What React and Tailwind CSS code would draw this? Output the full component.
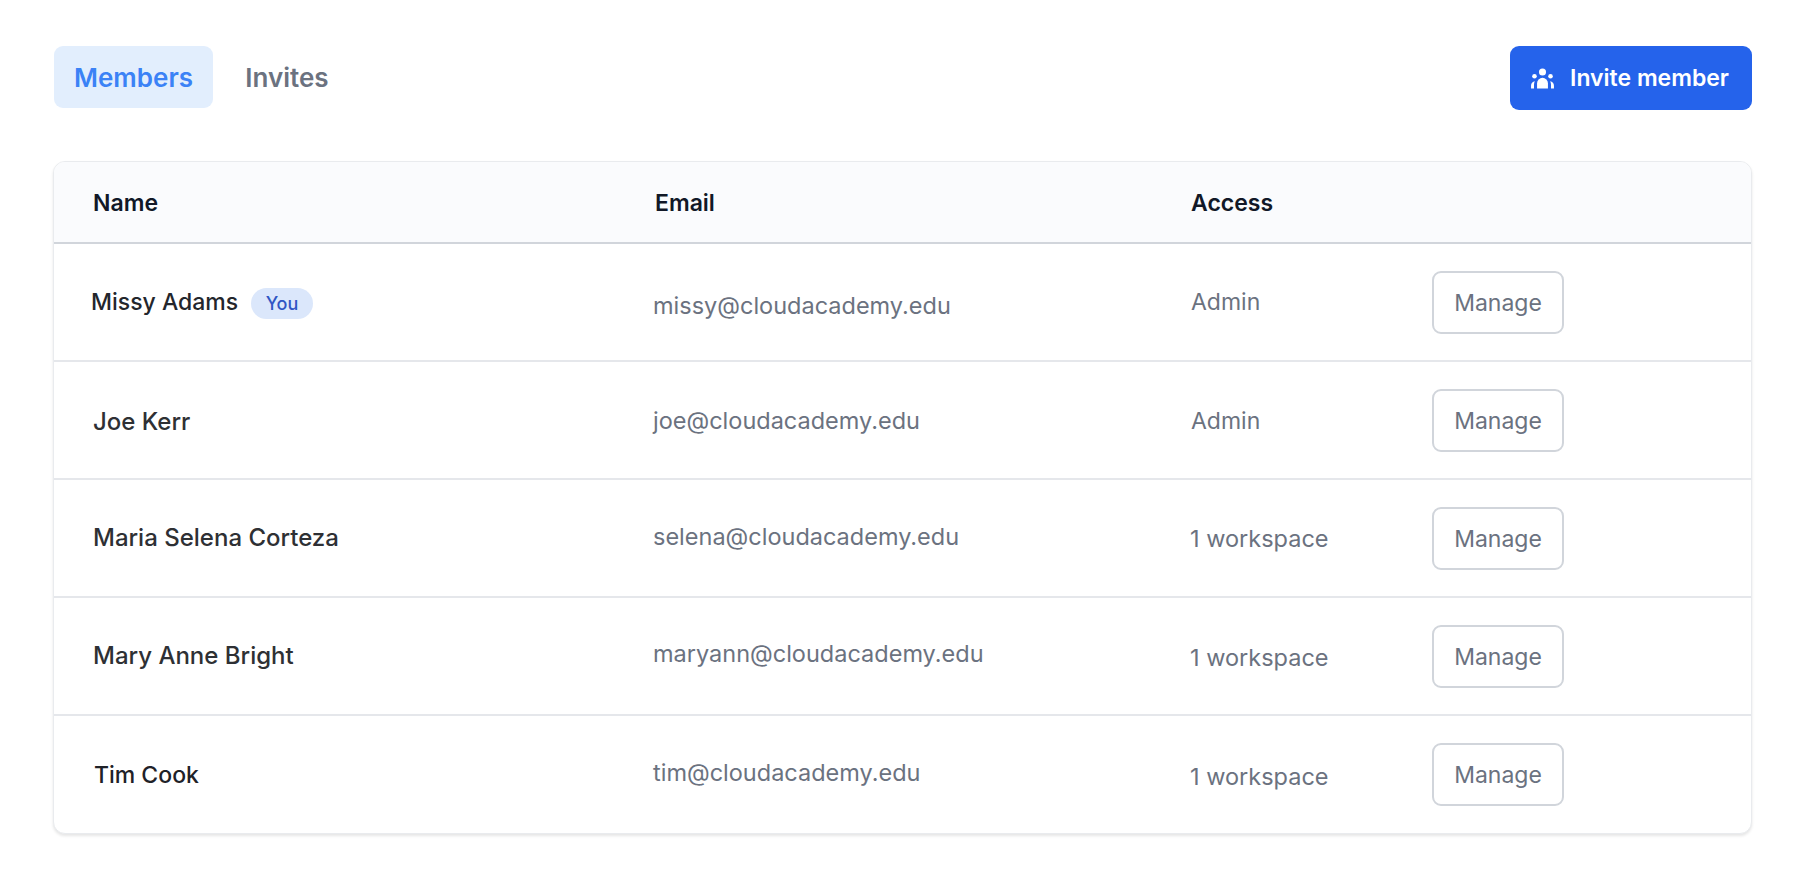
const MEMBERS = [
  {
    name: 'Missy Adams',
    email: 'missy@cloudacademy.edu',
    access: 'Admin',
    you: true,
    nameClass: 'text-[23px] -ml-[2px] text-[#23262c]',
    emailClass: 'mt-[7px]',
    accessClass: 'text-[23px]',
  },
  {
    name: 'Joe Kerr',
    email: 'joe@cloudacademy.edu',
    access: 'Admin',
    nameClass: 'text-[24px] mt-[3px] text-[#2e3034]',
    emailClass: 'mt-[2px]',
    accessClass: 'text-[23px] mt-[2px]',
  },
  {
    name: 'Maria Selena Corteza',
    email: 'selena@cloudacademy.edu',
    access: '1 workspace',
    nameClass: 'text-[24px] text-[#2e3034]',
    emailClass: '-mt-[2px]',
    accessClass: 'text-[23.5px] -ml-[1px] mt-[1px]',
  },
  {
    name: 'Mary Anne Bright',
    email: 'maryann@cloudacademy.edu',
    access: '1 workspace',
    nameClass: 'text-[24px] text-[#2e3034]',
    emailClass: '-mt-[4px]',
    accessClass: 'text-[23.5px] -ml-[1px] mt-[4px]',
  },
  {
    name: 'Tim Cook',
    email: 'tim@cloudacademy.edu',
    access: '1 workspace',
    nameClass: 'text-[23px] ml-[1px] mt-[2px] text-[#1f2228]',
    emailClass: '-mt-[4px]',
    accessClass: 'text-[23.5px] -ml-[1px] mt-[4px]',
  },
];

function GroupIcon() {
  return (
    <svg viewBox="0 0 24 22" fill="currentColor" className="h-[21px] w-[23px]">
      <circle cx="12" cy="4.2" r="3.7" />
      <circle cx="3.6" cy="8.6" r="2.4" />
      <circle cx="20.4" cy="8.6" r="2.4" />
      <path d="M6.3 21.5V16a5.7 5.7 0 0 1 11.4 0v5.5z" />
      <path d="M0 21.5v-3c0-2.4 1.6-4.2 4-4.6-.5 1-.9 2.2-.9 3.4v4.2z" />
      <path d="M24 21.5v-3c0-2.4-1.6-4.2-4-4.6.5 1 .9 2.2.9 3.4v4.2z" />
    </svg>
  );
}

export default function App() {
  return (
    <div className="min-h-screen bg-white px-[54px] pt-[46px] font-['Inter',sans-serif]">
      {/* Tabs + invite */}
      <div className="flex items-start justify-between">
        <div className="flex items-center gap-[32px]">
          <button className="h-[62px] w-[159px] rounded-[9px] bg-[#e2eefd] text-[26px] font-semibold text-[#3b82f6]">
            Members
          </button>
          <button className="h-[62px] w-[84px] text-[26px] font-semibold text-[#6b7280]">
            Invites
          </button>
        </div>
        <button className="flex h-[64px] w-[242px] items-center justify-center gap-[16px] rounded-[9px] bg-[#2563eb] pr-[2px] text-[23px] font-semibold text-white">
          <GroupIcon />
          Invite member
        </button>
      </div>

      {/* Members table */}
      <div className="-ml-[1px] mt-[51px] overflow-hidden rounded-[12px] border border-[#e9ebee] bg-white shadow-[0_2px_3px_rgba(0,0,0,0.1)]">
        <div className="grid h-[82px] grid-cols-[562px_536px_242px_1fr] items-center border-b-2 border-[#d1d5db] bg-[#fafbfd] pl-[39px] pt-[2px] text-[23px] font-semibold text-[#111827]">
          <div>Name</div>
          <div>Email</div>
          <div>Access</div>
        </div>
        {MEMBERS.map((member, i) => (
          <div
            key={member.email}
            className={`grid h-[118px] grid-cols-[560px_538px_241px_1fr] items-center pl-[39px] last:h-[117px] ${i < MEMBERS.length - 1 ? 'border-b-2 border-[#e5e7eb]' : ''}`}
          >
            <div className={`flex items-center gap-[13px] font-medium ${member.nameClass}`}>
              {member.name}
              {member.you && (
                <span className="mt-[2px] rounded-full bg-[#dbe7fb] px-[14.5px] py-[2px] text-[18px] font-medium text-[#3056c4]">
                  You
                </span>
              )}
            </div>
            <div className={`text-[23.5px] text-[#6b7280] ${member.emailClass}`}>{member.email}</div>
            <div className={`text-[#6b7280] ${member.accessClass}`}>{member.access}</div>
            <button className="h-[63px] w-[132px] rounded-[9px] border-2 border-[#d1d5db] pt-[2px] text-[23px] text-[#6b7280]">
              Manage
            </button>
          </div>
        ))}
      </div>
    </div>
  );
}
